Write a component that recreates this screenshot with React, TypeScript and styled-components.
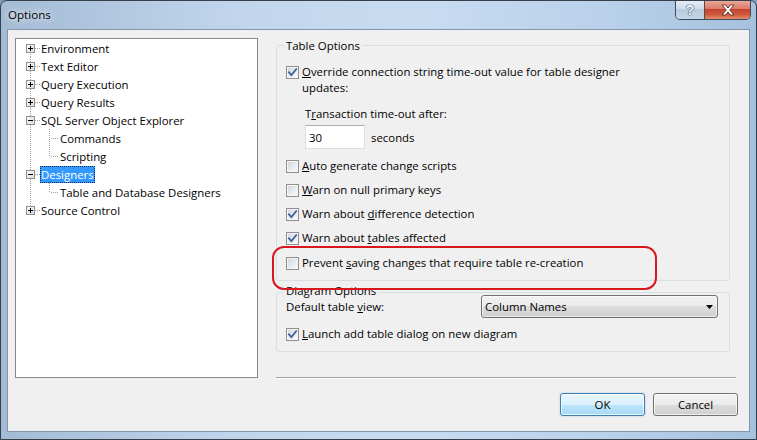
import React from 'react'
import styled, { createGlobalStyle } from 'styled-components'

const GlobalStyle = createGlobalStyle`
  html, body {
    margin: 0;
    padding: 0;
  }

  body {
    width: 757px;
    height: 440px;
    overflow: hidden;
    background: #7f9cbd;
    color: #000;
    font-family: 'Open Sans', 'Segoe UI', sans-serif;
    font-size: 11.4px;
  }

  * {
    box-sizing: border-box;
  }
`

const Window = styled.div`
  background: linear-gradient(
    to right,
    #a3bbd5 0%,
    #c0d5eb 30%,
    #c8dcf1 55%,
    #b9d1ea 80%,
    #a6c1de 100%
  );
  border: 1px solid #36404d;
  border-radius: 7px 7px 0 0;
  display: flex;
  flex-direction: column;
  height: 440px;
  overflow: hidden;
  width: 757px;
`

const TitleBar = styled.div`
  align-items: flex-start;
  display: flex;
  flex: none;
  height: 28px;
  padding: 0 5px 0 7px;
`

const TitleText = styled.div`
  font-size: 11.6px;
  line-height: 16px;
  margin-top: 6px;
  text-shadow: 0 0 6px rgba(255, 255, 255, 0.9), 0 0 10px rgba(255, 255, 255, 0.7);
`

const CaptionButtons = styled.div`
  border: 1px solid #3d4a5b;
  border-radius: 0 0 5px 5px;
  border-top: none;
  display: flex;
  height: 20px;
  margin: -1px 0 0 auto;
  overflow: hidden;
`

const CaptionButton = styled.div<{ $close?: boolean }>`
  align-items: center;
  background: ${(p) =>
    p.$close
      ? 'linear-gradient(#e9ab9d 0%, #dc7d6b 45%, #c7432f 50%, #cf5a40 78%, #e5906b 100%)'
      : 'linear-gradient(#e6eef7 0%, #cfdcea 45%, #b8cadd 50%, #c4d5e8 100%)'};
  border-left: ${(p) => (p.$close ? '1px solid #5a4a4a' : 'none')};
  display: flex;
  justify-content: center;
  width: ${(p) => (p.$close ? '46px' : '28px')};
`

const HelpGlyph = styled.span`
  color: #f4f7fb;
  font-family: 'Liberation Sans', sans-serif;
  font-size: 14px;
  font-weight: 700;
  text-shadow: 0 0 1px #3a4d66, 0 0 1px #3a4d66, 0 0 1px #3a4d66;
`

const Client = styled.div`
  background: #f0f0f0;
  border: 1px solid #8396ad;
  display: flex;
  flex: 1;
  gap: 18px;
  margin: 0 6px 7px 6px;
  padding: 8px 11px 15px 7px;
`

const Tree = styled.div`
  align-self: flex-start;
  background: #fff;
  border: 1px solid #828790;
  flex: none;
  height: 340px;
  width: 243px;
`

const TreeRow = styled.div`
  align-items: center;
  display: flex;
  height: 18px;
`

const TreeLabel = styled.span<{ $selected?: boolean }>`
  background: ${(p) => (p.$selected ? '#3399ff' : 'transparent')};
  color: ${(p) => (p.$selected ? '#fff' : '#000')};
  line-height: 17px;
  margin-top: 1px;
  outline: ${(p) => (p.$selected ? '1px dotted #0c2f5c' : 'none')};
  outline-offset: -1px;
  padding: 0 1px;
  white-space: nowrap;
`

const RightColumn = styled.div`
  display: flex;
  flex: 1;
  flex-direction: column;
`

const GroupBox = styled.div<{ $top: number; $bottom: number }>`
  border: 1px solid #d5dfe5;
  border-radius: 3px;
  margin: ${(p) => p.$top}px 8px 0 0;
  padding: 0 9px ${(p) => p.$bottom}px 9px;
  position: relative;
`

const GroupCaption = styled.div<{ $lift: number }>`
  background: #f0f0f0;
  line-height: 16px;
  margin: ${(p) => -p.$lift}px 0 0 -2px;
  padding: 0 2px;
  width: fit-content;
`

const CheckRow = styled.div<{ $mt: number }>`
  align-items: flex-start;
  display: flex;
  gap: 3px;
  line-height: 16px;
  margin-top: ${(p) => p.$mt}px;
`

const Box = styled.span`
  background: linear-gradient(135deg, #cfd3d9 0%, #e9ebee 55%, #fbfbfb 100%);
  border: 1px solid #8e8f8f;
  box-shadow: inset 0 0 0 1px #f6f6f6;
  display: block;
  flex: none;
  height: 13px;
  margin-top: 2px;
  width: 13px;
`

const IndentLabel = styled.div`
  line-height: 16px;
  margin: 10px 0 0 19px;
`

const TimeoutRow = styled.div`
  align-items: center;
  display: flex;
  gap: 6px;
  margin: 3px 0 0 19px;
`

const TextBox = styled.input`
  background: #fff;
  border: 1px solid #dbdfe6;
  border-top-color: #abadb3;
  color: #000;
  font: inherit;
  height: 24px;
  outline: none;
  padding: 0 3px;
  width: 60px;
`

const ViewRow = styled.div`
  align-items: center;
  display: flex;
  height: 23px;
  margin-top: -4px;
`

const FieldLabel = styled.span`
  line-height: 16px;
  width: 195px;
`

const ComboBox = styled.div`
  align-items: center;
  background: linear-gradient(#f2f2f2 0%, #ebebeb 50%, #dddddd 50%, #cfcfcf 100%);
  border: 1px solid #707070;
  border-radius: 3px;
  box-shadow: inset 0 0 0 1px rgba(255, 255, 255, 0.6);
  display: flex;
  height: 23px;
  justify-content: space-between;
  padding: 0 4px 0 3px;
  width: 237px;
`

const Separator = styled.div`
  border-bottom: 1px solid #fff;
  border-top: 1px solid #a0a0a0;
  margin: auto 2px 14px 0;
`

const ButtonRow = styled.div`
  display: flex;
  gap: 8px;
  justify-content: flex-end;
`

const DialogButton = styled.button<{ $default?: boolean }>`
  background: ${(p) =>
    p.$default
      ? 'linear-gradient(#eaf6fd 0%, #d9f0fc 50%, #bee6fd 50%, #a7d9f5 100%)'
      : 'linear-gradient(#f2f2f2 0%, #ebebeb 50%, #dddddd 50%, #cfcfcf 100%)'};
  border: 1px solid ${(p) => (p.$default ? '#3c7fb1' : '#707070')};
  border-radius: 3px;
  box-shadow: ${(p) =>
    p.$default
      ? 'inset 0 0 0 1px rgba(255, 255, 255, 0.75), 0 0 2px rgba(80, 160, 220, 0.5)'
      : 'inset 0 0 0 1px rgba(255, 255, 255, 0.7)'};
  color: #000;
  font: inherit;
  height: 23px;
  padding: 0;
  width: 85px;
`

const Annotation = styled.div`
  border: 2px solid #d8171f;
  border-radius: 12px;
  height: 44px;
  left: -5px;
  pointer-events: none;
  position: absolute;
  top: 200px;
  width: 385px;
  z-index: 1;
`

type TreeItem = {
  label: string
  depth: 0 | 1
  toggle?: 'plus' | 'minus'
  root: 'first' | 'mid' | 'last'
  child?: 'mid' | 'last'
  selected?: boolean
}

const treeItems: TreeItem[] = [
  { label: 'Environment', depth: 0, toggle: 'plus', root: 'first' },
  { label: 'Text Editor', depth: 0, toggle: 'plus', root: 'mid' },
  { label: 'Query Execution', depth: 0, toggle: 'plus', root: 'mid' },
  { label: 'Query Results', depth: 0, toggle: 'plus', root: 'mid' },
  { label: 'SQL Server Object Explorer', depth: 0, toggle: 'minus', root: 'mid' },
  { label: 'Commands', depth: 1, root: 'mid', child: 'mid' },
  { label: 'Scripting', depth: 1, root: 'mid', child: 'last' },
  { label: 'Designers', depth: 0, toggle: 'minus', root: 'mid', selected: true },
  { label: 'Table and Database Designers', depth: 1, root: 'mid', child: 'last' },
  { label: 'Source Control', depth: 0, toggle: 'plus', root: 'last' }
]

const dots = { stroke: '#a0a0a0', strokeDasharray: '1 1', shapeRendering: 'crispEdges' as const }

function TreeGutter({ item }: { item: TreeItem }): JSX.Element {
  const width = item.depth === 0 ? 24 : 43
  const rootFrom = item.depth === 0 && item.root === 'first' ? 9 : 0
  const rootTo = item.depth === 0 && item.root === 'last' ? 9 : 18

  return (
    <svg width={width} height={18} style={{ flex: 'none', display: 'block' }}>
      <path d={`M14.5 ${rootFrom}V${rootTo}`} {...dots} />
      {item.depth === 0 && <path d="M19 9.5H24" {...dots} />}
      {item.depth === 1 && (
        <>
          <path d={`M33.5 0V${item.child === 'last' ? 10 : 18}`} {...dots} />
          <path d="M35 9.5H42" {...dots} />
        </>
      )}
      {item.toggle && (
        <g shapeRendering="crispEdges">
          <defs>
            <linearGradient id="toggleFill" x1="0" y1="0" x2="1" y2="1">
              <stop offset="0" stopColor="#ffffff" />
              <stop offset="1" stopColor="#d8d8d8" />
            </linearGradient>
          </defs>
          <rect x={10.5} y={5.5} width={8} height={8} fill="url(#toggleFill)" stroke="#919191" />
          <path d="M12 9.5H17" stroke="#000" />
          {item.toggle === 'plus' && <path d="M14.5 7V12" stroke="#000" />}
        </g>
      )}
    </svg>
  )
}

function CheckBox({ checked }: { checked?: boolean }): JSX.Element {
  return (
    <Box>
      {checked && (
        <svg width={11} height={11} style={{ display: 'block' }}>
          <path
            d="M2 5.3L4.4 8L9.2 2.2"
            fill="none"
            stroke="#3f5f9c"
            strokeWidth={1.8}
            strokeLinecap="square"
          />
        </svg>
      )}
    </Box>
  )
}

function CloseIcon(): JSX.Element {
  return (
    <svg width={14} height={12} viewBox="0 0 14 12">
      <path
        d="M1 1H4.5L7 4L9.5 1H13L8.8 6L13 11H9.5L7 8L4.5 11H1L5.2 6Z"
        fill="#fff"
        stroke="#5b2a22"
        strokeWidth={0.9}
        strokeLinejoin="round"
      />
    </svg>
  )
}

export default function App(): JSX.Element {
  return (
    <>
      <GlobalStyle />
      <Window>
        <TitleBar>
          <TitleText>Options</TitleText>
          <CaptionButtons>
            <CaptionButton>
              <HelpGlyph>?</HelpGlyph>
            </CaptionButton>
            <CaptionButton $close>
              <CloseIcon />
            </CaptionButton>
          </CaptionButtons>
        </TitleBar>

        <Client>
          <Tree>
            {treeItems.map((item) => (
              <TreeRow key={item.label}>
                <TreeGutter item={item} />
                <TreeLabel $selected={item.selected}>{item.label}</TreeLabel>
              </TreeRow>
            ))}
          </Tree>

          <RightColumn>
            <GroupBox $top={7} $bottom={9}>
              <GroupCaption $lift={8}>Table Options</GroupCaption>
              <CheckRow $mt={10}>
                <CheckBox checked />
                <span>
                  <u>O</u>verride connection string time-out value for table designer
                  <br />
                  updates:
                </span>
              </CheckRow>
              <IndentLabel>
                T<u>r</u>ansaction time-out after:
              </IndentLabel>
              <TimeoutRow>
                <TextBox defaultValue="30" readOnly />
                <span>seconds</span>
              </TimeoutRow>
              <CheckRow $mt={9}>
                <CheckBox />
                <span>
                  <u>A</u>uto generate change scripts
                </span>
              </CheckRow>
              <CheckRow $mt={8}>
                <CheckBox />
                <span>
                  <u>W</u>arn on null primary keys
                </span>
              </CheckRow>
              <CheckRow $mt={8}>
                <CheckBox checked />
                <span>
                  Warn about <u>d</u>ifference detection
                </span>
              </CheckRow>
              <CheckRow $mt={8}>
                <CheckBox checked />
                <span>
                  Warn about <u>t</u>ables affected
                </span>
              </CheckRow>
              <CheckRow $mt={9}>
                <CheckBox />
                <span>
                  Prevent <u>s</u>aving changes that require table re-creation
                </span>
              </CheckRow>
              <Annotation />
            </GroupBox>

            <GroupBox $top={11} $bottom={9}>
              <GroupCaption $lift={10}>Diagram Options</GroupCaption>
              <ViewRow>
                <FieldLabel>
                  Default table <u>v</u>iew:
                </FieldLabel>
                <ComboBox>
                  <span>Column Names</span>
                  <svg width={7} height={4} style={{ display: 'block' }}>
                    <path d="M0 0H7L3.5 4Z" fill="#000" />
                  </svg>
                </ComboBox>
              </ViewRow>
              <CheckRow $mt={8}>
                <CheckBox checked />
                <span>
                  <u>L</u>aunch add table dialog on new diagram
                </span>
              </CheckRow>
            </GroupBox>

            <Separator />

            <ButtonRow>
              <DialogButton $default>OK</DialogButton>
              <DialogButton>Cancel</DialogButton>
            </ButtonRow>
          </RightColumn>
        </Client>
      </Window>
    </>
  )
}
